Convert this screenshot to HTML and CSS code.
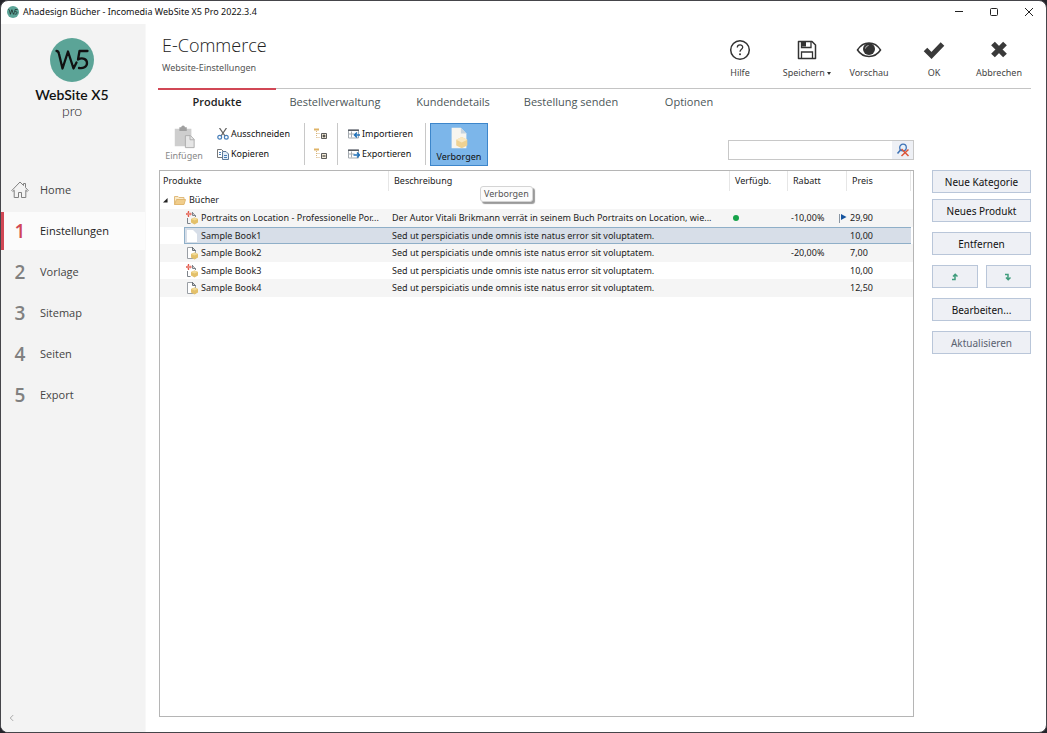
FILE: index.html
```html
<!DOCTYPE html>
<html lang="de">
<head>
<meta charset="utf-8">
<title>Ahadesign Bücher - Incomedia WebSite X5 Pro 2022.3.4</title>
<link rel="stylesheet" href="styles.css">
</head>
<body>
<svg class="defs" aria-hidden="true">
  <symbol id="w5" viewBox="0 0 44 44">
    <circle cx="22" cy="22" r="22" fill="#5ba497"/>
    <path d="M6.500 13q2 0 2.500 3l3.500 14.500L18 13.500l5.500 17 3-6M37.500 13H29.500l-1.500 8.500c4.500-2.500 9-.5 9 3.500 0 4-4 5.800-8 5" fill="none" stroke="#111" stroke-width="2.300" stroke-linejoin="round" stroke-linecap="round"/>
  </symbol>
  <symbol id="page" viewBox="0 0 13 14">
    <path d="M1.500 1.500h5l3 3v8h-8z" fill="#fff" stroke="#9a9fa5"/>
    <path d="M6 1l3.500 4M6.500 1v3.500h3" fill="none" stroke="#6c7278"/>
    <path d="M5 8l3.500-1.500L12 8v3.500L8.500 13.500 5 11.500z" fill="#e3c06a"/>
    <path d="M5 8l3.500-1.500L12 8 8.500 9.500z" fill="#f0d994"/>
  </symbol>
  <symbol id="new" viewBox="0 0 13 14">
    <path d="M1.500 7v5.500h3M6 1l3.500 4M6.500 1v3.500h3V6" fill="none" stroke="#7d838a"/>
    <path d="M5 8l3.500-1.500L12 8v3.500L8.500 13.500 5 11.500z" fill="#e3c06a"/>
    <path d="M5 8l3.500-1.500L12 8 8.500 9.500z" fill="#f0d994"/>
    <path d="M2.500 0v6M0 3h5.500" stroke="#e2584a" stroke-width="1.300"/>
    <path d="M1 1.500l3.500 3M4.500 1.500L1 4.500" stroke="#ee9a90" stroke-width=".8"/>
  </symbol>
  <symbol id="tree" viewBox="0 0 13 12">
    <path d="M0 1.500h5" stroke="#dfb468" stroke-width="2"/>
    <path d="M2.500 3v6.500M2.500 5.500h4M2.500 9.500h4" fill="none" stroke="#d8b57c" stroke-dasharray="1 1"/>
    <path d="M7.500 5.500h5v5h-5z" fill="#f2ead8" stroke="#5b5b5b"/>
  </symbol>
  <symbol id="sheet" viewBox="0 0 12 11">
    <path d="M.5 1.500h10v8H.5zM3.500 3v6M.5 5.500h6" fill="#fff" stroke="#a5abb1"/>
    <path d="M0 1h11v1.500H0z" fill="#5a5f66"/>
  </symbol>
</svg>

<div class="window">
  <header class="titlebar">
    <svg class="app-icon" aria-hidden="true"><use href="#w5"/></svg>
    <span class="app-title">Ahadesign Bücher - Incomedia WebSite X5 Pro 2022.3.4</span>
    <button class="win-btn" aria-label="Minimieren"><svg viewBox="0 0 10 10"><path d="M1 4.500h8"/></svg></button>
    <button class="win-btn" aria-label="Maximieren"><svg viewBox="0 0 10 10"><rect x="1.500" y="1.500" width="7" height="7" rx="1"/></svg></button>
    <button class="win-btn" aria-label="Schließen"><svg viewBox="0 0 10 10"><path d="M1 1l8 8M9 1L1 9"/></svg></button>
  </header>

  <div class="body">
    <aside class="sidebar">
      <div class="brand">
        <svg class="brand-mark" aria-hidden="true"><use href="#w5"/></svg>
        <span class="brand-name">WebSite X5</span>
        <span class="brand-edition">pro</span>
      </div>
      <nav class="steps">
        <a class="step" href="#"><span class="step-no"><svg class="home" viewBox="0 0 18 18"><path d="M.8 9.500L9 1l3.500 3.500V2.500h2V6.500l2.700 3-1 1-1.400-1.300V16.500h-4.300v-5h-3v5H3.200V9.200L1.800 10.500z"/></svg></span>Home</a>
        <a class="step current" href="#"><span class="step-no">1</span>Einstellungen</a>
        <a class="step" href="#"><span class="step-no">2</span>Vorlage</a>
        <a class="step" href="#"><span class="step-no">3</span>Sitemap</a>
        <a class="step" href="#"><span class="step-no">4</span>Seiten</a>
        <a class="step" href="#"><span class="step-no">5</span>Export</a>
      </nav>
      <button class="collapse" aria-label="Einklappen"><svg viewBox="0 0 6 8"><path d="M5 .5L1.500 4 5 7.500"/></svg></button>
    </aside>

    <main class="main">
      <div class="head">
        <div class="heading">
          <h1>E-Commerce</h1>
          <p>Website-Einstellungen</p>
        </div>
        <div class="actions">
          <button class="action"><svg viewBox="0 0 26 22"><circle cx="13" cy="11" r="9.300" fill="none" stroke="#333" stroke-width="1.500"/><path d="M10.300 8.500c0-3.500 5.400-3.500 5.400-.3 0 2-2.700 2-2.700 4.600" fill="none" stroke="#333" stroke-width="1.300"/><circle cx="13" cy="15.300" r="1" fill="#333"/></svg><span>Hilfe</span></button>
          <button class="action"><svg viewBox="0 0 26 22"><path d="M4.500 2.500h13.500l3.500 3.500v13.500h-17z" fill="none" stroke="#333" stroke-width="1.500" stroke-linejoin="round"/><path d="M7.500 2.500v6h9.500v-6M7.500 19.500v-6.500h11v6.500" fill="none" stroke="#333" stroke-width="1.300"/><path d="M8 3h4v4.500H8z" fill="#333"/></svg><span>Speichern <i class="caret"></i></span></button>
          <button class="action"><svg viewBox="0 0 26 22"><path d="M1.500 11C7 1.500 19 1.500 24.500 11 19 19.500 7 19.500 1.500 11z" fill="none" stroke="#333" stroke-width="1.500"/><circle cx="13" cy="10" r="6" fill="#333"/><path d="M12.500 6.500q-3 .5-3 3" fill="none" stroke="#bbb"/></svg><span>Vorschau</span></button>
          <button class="action"><svg viewBox="0 0 26 22"><path d="M4.500 10.500l6 6L21.500 5" fill="none" stroke="#3a3a3a" stroke-width="5"/></svg><span>OK</span></button>
          <button class="action"><svg viewBox="0 0 26 22"><path d="M7 4.500l12 12M19 4.500l-12 12" fill="none" stroke="#3a3a3a" stroke-width="5.300"/></svg><span>Abbrechen</span></button>
        </div>
      </div>

      <nav class="tabs">
        <a class="tab active" href="#">Produkte</a>
        <a class="tab" href="#">Bestellverwaltung</a>
        <a class="tab" href="#">Kundendetails</a>
        <a class="tab" href="#">Bestellung senden</a>
        <a class="tab" href="#">Optionen</a>
      </nav>

      <div class="work">
        <div class="content">
          <div class="toolbar">
            <button class="tool-big" disabled>
              <svg class="big-icon" viewBox="0 0 26 26"><path d="M3 4h18v19H3z" fill="#cecece"/><path d="M8 2.500h2a2 2 0 0 1 4 0h2v4H8z" fill="#a0a0a0"/><path d="M14.500 11.500h5.500l4 4v9h-9.500z" fill="#e6e6e6" stroke="#ababab"/><path d="M19.500 11.500v4.500H24" fill="none" stroke="#ababab"/></svg>
              <span>Einfügen</span>
            </button>
            <div class="tool-stack clip">
              <button class="tool"><svg viewBox="0 0 12 12"><path d="M2.500 0L8 8M9.500 0L4 8" stroke="#666" stroke-width="1.300"/><circle cx="2.700" cy="9.300" r="1.900" fill="none" stroke="#477fba" stroke-width="1.200"/><circle cx="9.300" cy="9.300" r="1.900" fill="none" stroke="#477fba" stroke-width="1.200"/></svg>Ausschneiden</button>
              <button class="tool"><svg viewBox="0 0 12 12"><path d="M.5 1.500h4l2 2v6h-6z" fill="#fff" stroke="#777"/><path d="M5.500 3.500h3.500l2.500 2.500v5.500h-6z" fill="#e3edf7" stroke="#5c7898"/><path d="M7 7.500h3M7 9.500h3M2 4.500h2M2 6.500h2" stroke="#477fba"/></svg>Kopieren</button>
            </div>
            <div class="tool-stack tree">
              <button class="tool" aria-label="Alle erweitern"><svg viewBox="0 0 13 12"><use href="#tree"/><path d="M8.500 8h3M10 6.500v3" stroke="#222"/></svg></button>
              <button class="tool" aria-label="Alle reduzieren"><svg viewBox="0 0 13 12"><use href="#tree"/><path d="M8.500 8h3" stroke="#222"/></svg></button>
            </div>
            <div class="tool-stack transfer">
              <button class="tool"><svg viewBox="0 0 12 11"><use href="#sheet"/><path d="M12 6.500H7M9 4L6.500 6.500 9 9" fill="none" stroke="#2272b9" stroke-width="1.500"/></svg>Importieren</button>
              <button class="tool"><svg viewBox="0 0 12 11"><use href="#sheet"/><path d="M5.500 6.500H11M9 4l2.500 2.500L9 9" fill="none" stroke="#2272b9" stroke-width="1.500"/></svg>Exportieren</button>
            </div>
            <div class="toggle">
              <button class="tool-big pressed" aria-pressed="true" aria-describedby="tip">
                <svg class="big-icon" viewBox="0 0 26 26"><path d="M5 2h10l6 6v16H5z" fill="#f7f5ef"/><path d="M15 2v6h6z" fill="#c8d4de"/><path d="M10 15l6-3 6 3v6l-6 3-6-3z" fill="#efd292"/><path d="M10 15l6-3 6 3-6 3z" fill="#f9e8c2"/></svg>
                <span>Verborgen</span>
              </button>
              <span class="tooltip" id="tip" role="tooltip">Verborgen</span>
            </div>
            <div class="search">
              <input type="text" aria-label="Suchen">
              <button aria-label="Suche löschen"><svg viewBox="0 0 14 14"><circle cx="7" cy="4.500" r="3.300" fill="#e8f1fa" stroke="#3f73b5" stroke-width="1.300"/><path d="M4.500 7L1.500 10.500" stroke="#3f73b5" stroke-width="1.600"/><path d="M5.500 6l7 7M12.500 6.500L5.500 13" stroke="#dc5539" stroke-width="1.500"/></svg></button>
            </div>
          </div>

          <div class="list">
            <table>
              <colgroup><col class="c-name"><col><col class="c-avail"><col class="c-disc"><col class="c-price"><col class="c-end"></colgroup>
              <thead><tr><th>Produkte</th><th>Beschreibung</th><th>Verfügb.</th><th>Rabatt</th><th>Preis</th><th></th></tr></thead>
              <tbody>
                <tr><td colspan="6"><div class="folder"><svg class="twist" viewBox="0 0 6 6"><path d="M5.500 0v5.500H0z" fill="#222"/></svg><svg class="folder-icon" viewBox="0 0 12 10"><path d="M.5 9.500v-8h3.500l1 1h5V5" fill="#f9e9c8" stroke="#e0bb7c"/><path d="M2.500 4.500h9l-1.500 5H.5z" fill="#f0cd8c" stroke="#e2b871"/></svg>Bücher</div></td></tr>
                <tr><td><div class="item"><svg><use href="#new"/></svg><span>Portraits on Location - Professionelle Por...</span></div></td><td>Der Autor Vitali Brikmann verrät in seinem Buch Portraits on Location, wie...</td><td><span class="dot"></span></td><td><div class="disc">-10,00%<svg class="flag" viewBox="0 0 8 9"><path d="M.5 0v9" stroke="#8a96a3"/><path d="M2 0l5.500 3L2 6z" fill="#15539e"/></svg></div></td><td>29,90</td><td></td></tr>
                <tr class="selected"><td><div class="item"><svg viewBox="0 0 13 14"><path d="M1 1h6l4 4v8H1z" fill="#fff"/></svg><span>Sample Book1</span></div></td><td>Sed ut perspiciatis unde omnis iste natus error sit voluptatem.</td><td></td><td></td><td>10,00</td><td></td></tr>
                <tr><td><div class="item"><svg><use href="#page"/></svg><span>Sample Book2</span></div></td><td>Sed ut perspiciatis unde omnis iste natus error sit voluptatem.</td><td></td><td>-20,00%</td><td>7,00</td><td></td></tr>
                <tr><td><div class="item"><svg><use href="#new"/></svg><span>Sample Book3</span></div></td><td>Sed ut perspiciatis unde omnis iste natus error sit voluptatem.</td><td></td><td></td><td>10,00</td><td></td></tr>
                <tr><td><div class="item"><svg><use href="#page"/></svg><span>Sample Book4</span></div></td><td>Sed ut perspiciatis unde omnis iste natus error sit voluptatem.</td><td></td><td></td><td>12,50</td><td></td></tr>
              </tbody>
            </table>
          </div>
        </div>

        <div class="commands">
          <div class="group"><button class="cmd">Neue Kategorie</button><button class="cmd">Neues Produkt</button></div>
          <button class="cmd">Entfernen</button>
          <div class="pair">
            <button class="cmd" aria-label="Nach oben"><svg viewBox="0 0 8 8"><path d="M1 6.500h3V2M2 3.500L4.200 1.200 6.500 3.500"/></svg></button>
            <button class="cmd" aria-label="Nach unten"><svg viewBox="0 0 8 8"><path d="M1 1.500h3V6M2 4.500l2.200 2.300L6.500 4.500"/></svg></button>
          </div>
          <button class="cmd">Bearbeiten...</button>
          <button class="cmd" disabled>Aktualisieren</button>
        </div>
      </div>
    </main>
  </div>
</div>
</body>
</html>
```
FILE: styles.css
```css
* { box-sizing: border-box; }
body {
  margin: 0;
  background: #24242a;
  color: #222;
  font: 10px/16px "Noto Sans", sans-serif;
}
button { padding: 0; border: 0; background: none; font: inherit; color: inherit; }
a { color: inherit; text-decoration: none; }
svg { display: block; flex: none; }
.defs { position: absolute; width: 0; height: 0; }

.window {
  display: flex;
  flex-direction: column;
  height: 100vh;
  border: 1px solid #45454a;
  border-radius: 8px;
  background: #fff;
  overflow: hidden;
}
.titlebar { display: flex; align-items: center; height: 22px; margin-bottom: 1px; padding: 0 0 0 6px; }
.app-icon { width: 12px; height: 12px; margin-right: 4px; }
.app-title { flex: 1; font-size: 9px; color: #111; }
.win-btn { display: grid; place-items: center; width: 35px; height: 22px; }
.win-btn svg { width: 10px; height: 10px; fill: none; stroke: #222; }
.body { display: flex; flex: 1; min-height: 0; }

.sidebar {
  display: flex;
  flex-direction: column;
  flex: none;
  width: 145px;
  background: #f3f3f3;
  border-right: 1px solid #f8f8f8;
}
.brand { display: flex; flex-direction: column; align-items: center; padding-top: 14px; height: 147px; padding-right: 2px; }
.brand-mark { width: 44px; height: 44px; margin-bottom: 4px; }
.brand-name { font: 600 14px/17px Lato, sans-serif; color: #111; }
.brand-edition { font: 300 14px/16px Lato, sans-serif; color: #222; }
.step { display: flex; align-items: center; height: 38px; margin-bottom: 3px; padding-left: 8px; font: 11px/16px "Open Sans", sans-serif; color: #444; }
.step-no { display: flex; justify-content: center; width: 22px; margin-right: 9px; font: 600 19px/24px "Open Sans", sans-serif; color: #808080; }
.step.current { padding-left: 5px; border-left: 3px solid #d14755; background: #fbfbfb; color: #222; font-weight: 500; }
.step.current .step-no { color: #d14755; }
.home { width: 18px; height: 18px; fill: none; stroke: #808080; }
.collapse { margin: auto auto 10px 8px; }
.collapse svg { width: 5px; height: 8px; fill: none; stroke: #999; }

.main { display: flex; flex-direction: column; flex: 1; min-width: 0; padding: 0 15px 15px 12px; }
.head { display: flex; justify-content: space-between; height: 64px; }
.heading { padding: 9px 0 0 4px; }
h1 { margin: 0 0 4px; font: 300 18px/24px "Open Sans", sans-serif; color: #222; }
.heading p { margin: 0; font-size: 9px; line-height: 14px; color: #555; }
.actions { display: grid; grid-template-columns: 74px 60px 64px 66px 64px; }
.action { display: flex; flex-direction: column; align-items: center; gap: 4px; padding-top: 15px; font-size: 9px; line-height: 16px; color: #444; }
.action svg { width: 26px; height: 22px; }
.action span { white-space: nowrap; }
.caret { display: inline-block; vertical-align: middle; border: 2px solid transparent; border-top: 3px solid #333; border-bottom: 0; }

.tabs { display: flex; border-top: 1px solid #c4c4c4; margin-bottom: 6px; }
.tab { width: 118px; height: 27px; text-align: center; font: 11px/26px "Open Sans", sans-serif; color: #4c5658; }
.tab.active { border-top: 2px solid #d14755; margin-top: -1px; color: #222; font-weight: 600; line-height: 24px; }

.work { display: flex; flex: 1; gap: 18px; min-height: 0; padding-left: 1px; }
.content { display: flex; flex-direction: column; flex: 1; min-width: 0; }
.toolbar { display: flex; align-items: center; height: 44px; margin-bottom: 4px; }
.tool-big { display: flex; flex-direction: column; align-items: center; width: 50px; height: 43px; padding-top: 2px; font-size: 9px; line-height: 14px; }
.tool-big:disabled { color: #888; }
.big-icon { width: 26px; height: 24px; }
.pressed { width: 58px; border: 1px solid #3d86cb; background: #7cb6ea; color: #111; }
.toggle { position: relative; padding-left: 4px; }
.tooltip {
  position: absolute;
  left: 54px;
  top: 63px;
  z-index: 1;
  padding: 0 3px;
  border: 1px solid #d4d4d4;
  border-radius: 3px;
  background: #fcfcfc;
  box-shadow: 2px 2px 1px #999;
  font-size: 9px;
  line-height: 14px;
  color: #555;
}
.tool-stack { display: flex; flex-direction: column; gap: 4px; padding: 3px 0; border-right: 1px solid #c8c8c8; }
.tool-stack.clip { padding: 3px 14px 3px 8px; }
.tool-stack.tree { padding: 3px 10px 3px 9px; }
.tool-stack.transfer { padding: 3px 12px 3px 10px; }
.tool { display: flex; align-items: center; gap: 2px; height: 16px; font-size: 9px; color: #111; }
.tool svg { width: 12px; height: 12px; }
.tree svg { width: 13px; }
.search { display: flex; width: 186px; height: 20px; margin: 12px 0 0 auto; border: 1px solid #c8c8c8; }
.search input { flex: 1; min-width: 0; border: 0; outline: 0; padding: 0 4px; font: inherit; }
.search button { display: grid; place-items: center; width: 21px; background: #eef0f5; }
.search svg { width: 14px; height: 14px; }

.list { flex: 1; border: 1px solid #b5b5b5; overflow: hidden; }
table { width: 100%; table-layout: fixed; border-collapse: separate; border-spacing: 0; }
.c-name { width: 229px; }
.c-avail { width: 58px; }
.c-disc { width: 59px; }
.c-price { width: 64px; }
.c-end { width: 2px; }
th { height: 20px; padding: 0 0 0 5px; border-right: 1px solid #e6e6e6; text-align: left; font-size: 9px; font-weight: 400; line-height: 16px; }
th:first-child { padding-left: 3px; }
th:last-child { border-right: 0; padding: 0; }
td { height: 18px; padding: 0 0 0 3px; font-size: 9px; line-height: 16px; white-space: nowrap; }
tbody tr:nth-child(odd) td { height: 17px; }
tbody tr:first-child td { height: 18px; }
tbody tr:nth-child(even) td { background: #f5f5f5; }
td:first-child, td:last-child { padding: 0; }
.folder { display: flex; align-items: center; padding-left: 3px; }
.twist { width: 5px; height: 5px; margin-right: 6px; }
.folder-icon { width: 12px; height: 10px; margin-right: 3px; }
.item { display: flex; align-items: center; margin-left: 24px; padding-left: 2px; line-height: 16px; }
.item svg { width: 13px; height: 14px; margin-right: 2px; }
.selected td:not(:first-child):not(:last-child), .selected .item { border: 1px solid #8fafc8; border-width: 1px 0; background: #d7dee8; }
.selected .item { border-left-width: 1px; padding-left: 1px; line-height: 15px; }
.selected td:nth-child(5) { border-right-width: 1px; }
.selected td { line-height: 15px; }
.dot { display: block; width: 6px; height: 6px; border-radius: 50%; background: #16a34a; }
.disc { display: flex; align-items: center; justify-content: space-between; }
.flag { width: 8px; height: 9px; }

.commands { display: flex; flex-direction: column; gap: 10px; width: 99px; padding-top: 48px; }
.group { display: flex; flex-direction: column; gap: 6px; }
.pair { display: grid; grid-template-columns: 1fr 1fr; gap: 8px; }
.cmd { display: grid; place-items: center; height: 23px; border: 1px solid #b9c6d9; background: #eef0f5; font-size: 10px; line-height: 16px; color: #111; }
.cmd:disabled { color: #5a6270; }
.cmd svg { width: 8px; height: 8px; fill: none; stroke: #3f9c7c; stroke-width: 1.500; }
```
